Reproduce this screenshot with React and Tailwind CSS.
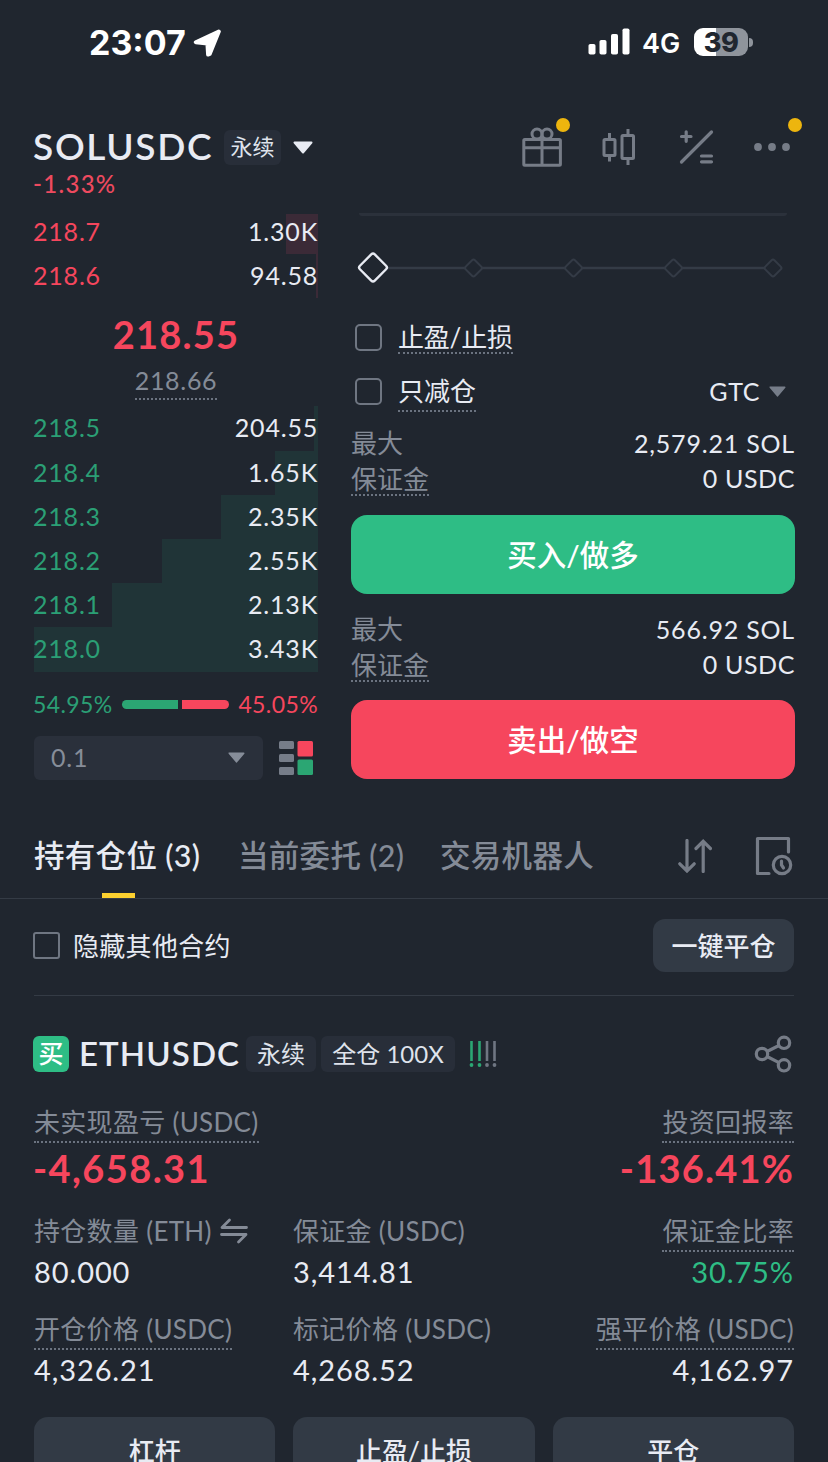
import React from 'react';

const asks = [
  { price: '218.7', size: '1.30K', depth: 32, depthTop: true },
  { price: '218.6', size: '94.58', depth: 2 },
];

const bids = [
  { price: '218.5', size: '204.55', depth: 4 },
  { price: '218.4', size: '1.65K', depth: 43 },
  { price: '218.3', size: '2.35K', depth: 97 },
  { price: '218.2', size: '2.55K', depth: 156 },
  { price: '218.1', size: '2.13K', depth: 206 },
  { price: '218.0', size: '3.43K', depth: 284 },
];

const Dotted = ({ children, className = '' }) => (
  <span className={`flex items-center border-y-2 border-dotted border-t-transparent border-b-[#6b7380] ${className}`}>
    {children}
  </span>
);

const Checkbox = ({ className = 'rounded-[5px]' }) => (
  <span className={`w-[27px] h-[27px] shrink-0 border-2 border-[#6f7682] ${className}`} />
);

const Caret = ({ className }) => (
  <svg viewBox="0 0 20 13" className={className} fill="currentColor" stroke="currentColor" strokeWidth="2" strokeLinejoin="round">
    <path d="M1.5 1.5h17L10 11.5z" />
  </svg>
);

function StatusBar() {
  return (
    <div className="h-[84px] shrink-0 flex items-center justify-between pl-[89px] pr-[77px] text-white font-['Inter']">
      <div className="flex items-center pt-[1px]">
        <span className="text-[34px] leading-none font-bold w-[104px] pt-[1px]">23:07</span>
        <svg viewBox="0 0 28 28" className="w-7 h-7" fill="#fff" stroke="#fff" strokeWidth="4" strokeLinejoin="round">
          <path d="M25.8 2.6L2.8 13.2l11.6 1.2.7 11.2 1.6-.6z" />
        </svg>
      </div>
      <div className="flex items-center">
        <svg viewBox="0 0 42 28" className="w-[42px] h-7 mr-3 -ml-px" fill="#fff">
          <rect x="0.5" y="16" width="7" height="10.5" rx="1.8" />
          <rect x="11.5" y="12" width="7" height="14.5" rx="1.8" />
          <rect x="23" y="6" width="7" height="20.5" rx="1.8" />
          <rect x="34.5" y="0.5" width="7" height="26" rx="1.8" />
        </svg>
        <span className="text-[27px] leading-none font-semibold w-[52px] pt-[2px]">4G</span>
        <div className="relative w-[54px] h-[28px] rounded-[9px] bg-linear-to-r from-white from-40% to-[#8f949c] to-40% flex items-center justify-center text-[27px] leading-none font-extrabold text-[#20262f] tracking-[-0.5px]">
          39
        </div>
        <span className="w-1 h-[9px] ml-[1px] -mr-[2px] rounded-r-full bg-[#8f949c]" />
      </div>
    </div>
  );
}

function Header() {
  return (
    <div className="relative h-[130px] shrink-0 px-[34px]">
      <div className="h-[126px] flex items-center justify-between">
        <div className="flex items-center">
          <span className="w-[190px] pb-[3px] -ml-px mr-px text-[37px] leading-none font-semibold tracking-[1.7px] text-[#e8ebf3]">SOLUSDC</span>
          <span className="w-[57px] h-[35px] rounded-md bg-[#282e39] flex items-center justify-center text-[22px] leading-none text-[#dfe3ec]">永续</span>
          <Caret className="w-5 h-[13px] ml-3 text-[#e8ebf3]" />
        </div>
        <div className="flex items-center -translate-x-px text-[#767c87]">
          <svg viewBox="0 0 40 40" className="w-10 h-10 mr-[39px]" fill="none" stroke="currentColor" strokeWidth="3">
            <rect x="1.8" y="12.5" width="36.6" height="25.8" rx="1" />
            <path d="M1.8 20.8h36.6M20 12v26" />
            <circle cx="15" cy="7" r="5" />
            <circle cx="25" cy="7" r="5" />
          </svg>
          <svg viewBox="0 0 36 38" className="w-9 h-[38px] mr-[41px]" fill="none" stroke="currentColor" strokeWidth="3">
            <rect x="3" y="11.5" width="11" height="16" rx="1" />
            <path d="M8.5 5v6M8.5 28v5.5M27 1v6M27 31v6" />
            <rect x="21" y="7.5" width="11.5" height="23" rx="1" />
          </svg>
          <svg viewBox="0 0 36 36" className="w-9 h-9 mr-[40px]" fill="none" stroke="currentColor" strokeWidth="3.2" strokeLinecap="round">
            <path d="M3.500 33L33.500 3M3.500 7.500h9.500M8.200 2.800v9.500M23.500 27h10M23.500 32.800h10" />
          </svg>
          <svg viewBox="0 0 36 8" className="w-9 h-2 mr-[3px]" fill="currentColor">
            <circle cx="4" cy="4" r="3.9" />
            <circle cx="18" cy="4" r="3.9" />
            <circle cx="32" cy="4" r="3.9" />
          </svg>
        </div>
      </div>
      <span className="absolute left-[33px] top-[88px] text-[24px] leading-6 font-medium tracking-[1.3px] text-[#ee4a5f]">-1.33%</span>
      <span className="absolute left-[556px] top-[34px] w-[14px] h-[14px] rounded-full bg-[#edb50e]" />
      <span className="absolute left-[788px] top-[34px] w-[14px] h-[14px] rounded-full bg-[#edb50e]" />
    </div>
  );
}

function BookRow({ row, side }) {
  return (
    <div className="relative h-[44.2px] flex items-center justify-between text-[25px] leading-none tracking-[0.8px]">
      <span
        className={`absolute right-0 bottom-0 ${side === 'ask' ? 'bg-[#3b2a37]' : 'bg-[#203437]'} ${row.depthTop ? 'top-1' : 'top-0'}`}
        style={{ width: row.depth }}
      />
      <span className={`relative -ml-px pb-[1px] ${side === 'ask' ? 'text-[#f6465d]' : 'text-[#2b9f75]'}`}>{row.price}</span>
      <span className="relative pb-[1px] text-[#e8ebf3]">{row.size}</span>
    </div>
  );
}

function OrderBook() {
  return (
    <div className="w-[284px] shrink-0 -mt-1">
      {asks.map(row => <BookRow key={row.price} row={row} side="ask" />)}
      <div className="h-[72px] flex items-center justify-center text-[38px] leading-none font-bold tracking-[1.2px] text-[#f6465d]">218.55</div>
      <div className="h-[37px] -mt-[8px] flex items-center justify-center">
        <Dotted className="h-[38px] text-[25px] leading-none tracking-[0.7px] text-[#848b97]">218.66</Dotted>
      </div>
      <div className="h-[7px]" />
      {bids.map(row => <BookRow key={row.price} row={row} side="bid" />)}
      <div className="h-[64px] pt-[1px] flex items-center justify-between text-[23px] leading-none tracking-[0.4px]">
        <span className="-ml-px text-[#2b9f75]">54.95%</span>
        <div className="flex gap-1 -ml-px">
          <span className="w-[56px] h-[9px] rounded-l-full bg-[#2ba673]" />
          <span className="w-[47px] h-[9px] rounded-r-full bg-[#f6465d]" />
        </div>
        <span className="text-[#f6465d]">45.05%</span>
      </div>
      <div className="h-11 flex items-center justify-between">
        <div className="w-[229px] h-11 rounded-md bg-[#2a303b] flex items-center justify-between pl-[17px] pr-[18px] text-[#868d99]">
          <span className="text-[25px] leading-none tracking-[0.8px]">0.1</span>
          <Caret className="w-[17px] h-[11px]" />
        </div>
        <svg viewBox="0 0 34 34" className="w-[34px] h-[34px] mr-[5px]">
          <g fill="#767d89">
            <rect x="0" y="0" width="15" height="8" rx="1.5" />
            <rect x="0" y="13" width="15" height="8" rx="1.5" />
            <rect x="0" y="26" width="15" height="8" rx="1.5" />
          </g>
          <rect x="18.5" y="0" width="15.5" height="15.5" rx="1.5" fill="#f6465d" />
          <rect x="18.5" y="18.5" width="15.5" height="15.5" rx="1.5" fill="#2ba673" />
        </svg>
      </div>
    </div>
  );
}

function MaxInfo({ max }) {
  return (
    <div className="text-[25px] leading-none tracking-[0.6px] text-[#e8ebf3]">
      <div className="h-9 flex items-center justify-between">
        <span className="text-[26px] tracking-normal text-[#848b97]">最大</span>
        <span className="tracking-[0.8px]">{max}</span>
      </div>
      <div className="h-[35px] flex items-center justify-between">
        <Dotted className="h-[34px] text-[26px] tracking-normal text-[#848b97]">保证金</Dotted>
        <span>0 USDC</span>
      </div>
    </div>
  );
}

function OrderForm() {
  return (
    <div className="w-[444px] -mr-px text-[#e8ebf3]">
      <div className="h-[3px] -mt-[1px] mx-2 rounded-b-full bg-[#2b313b]" />
      <svg viewBox="0 0 444 104" className="w-[444px] h-[104px] -mb-1" fill="#20262f">
        <path d="M22 52h393" stroke="#343b46" strokeWidth="2.4" />
        <g stroke="#343b46" strokeWidth="2">
          <rect x="116" y="45.500" width="13" height="13" rx="2" transform="rotate(45 122.500 52)" />
          <rect x="216" y="45.500" width="13" height="13" rx="2" transform="rotate(45 222.500 52)" />
          <rect x="316" y="45.500" width="13" height="13" rx="2" transform="rotate(45 322.500 52)" />
          <rect x="415.500" y="45.500" width="13" height="13" rx="2" transform="rotate(45 422 52)" />
        </g>
        <rect x="11.5" y="41" width="21" height="21" rx="2.5" transform="rotate(45 22 51.5)" stroke="#e8ebf3" strokeWidth="2.4" />
      </svg>
      <div className="h-[42px] pl-1 flex items-center">
        <Checkbox />
        <Dotted className="ml-4 h-[34px] text-[26px] leading-none tracking-[-0.2px]">止盈/止损</Dotted>
      </div>
      <div className="h-[66px] pl-1 flex items-center">
        <Checkbox />
        <Dotted className="ml-4 h-[42px] text-[26px] leading-none">只减仓</Dotted>
        <span className="ml-auto text-[25px] leading-none tracking-[0.6px]">GTC</span>
        <Caret className="w-[17px] h-[11px] ml-[9px] mr-[9px] text-[#767d89]" />
      </div>
      <div className="mt-[1px]"><MaxInfo max="2,579.21 SOL" /></div>
      <div className="mt-[19px] h-[79px] rounded-[16px] bg-[#2ebd85] text-white text-[29.5px] leading-none font-medium flex items-center justify-center">买入/做多</div>
      <div className="mt-[17px]"><MaxInfo max="566.92 SOL" /></div>
      <div className="mt-[18px] h-[79px] rounded-[16px] bg-[#f6465d] text-white text-[29.5px] leading-none font-medium flex items-center justify-center">卖出/做空</div>
    </div>
  );
}

function Tabs() {
  return (
    <div className="mt-[37px] h-[82px] shrink-0 px-[34px] border-b border-[#343b45] flex text-[30.5px] leading-none font-medium tracking-[0.3px] text-[#848b97]">
      <div className="w-[204px] flex flex-col">
        <span className="h-[76px] pt-[1px] flex items-center text-[#e8ebf3]">持有仓位 (3)</span>
        <span className="w-[33px] h-[5px] ml-[68px] bg-[#fcd02f]" />
      </div>
      <span className="w-[202px] h-[76px] pt-[1px] flex items-center">当前委托 (2)</span>
      <span className="h-[76px] pt-[1px] flex items-center">交易机器人</span>
      <div className="h-[76px] pt-[3px] ml-auto flex items-center text-[#767c87]">
        <svg viewBox="0 0 34 34" className="w-[34px] h-[34px] mr-[43px]" fill="none" stroke="currentColor" strokeWidth="3.2" strokeLinecap="round">
          <path d="M9 1.500v30M1.800 24.800L9 32l7.200-7.200M25.200 32.500V2.500M18 9.500L25.200 2.300l7.200 7.200" />
        </svg>
        <svg viewBox="0 0 38 40" className="w-[38px] h-10 mr-[1px]" fill="none" stroke="currentColor" strokeWidth="3.2" strokeLinecap="round">
          <path d="M14 37.500H2.500V2.500h31v13.500" strokeLinejoin="round" />
          <circle cx="27" cy="29" r="8.700" />
          <path d="M26.500 25v4l2 3" />
        </svg>
      </div>
    </div>
  );
}

const Tag = ({ children, className }) => (
  <span className={`h-9 rounded-md bg-[#282e39] flex items-center justify-center text-[24px] leading-none text-[#dfe3ec] ${className}`}>{children}</span>
);

const Field = ({ label, value, dotted, right, tone = 'text-[#e8ebf3]' }) => (
  <div className={`flex flex-col whitespace-nowrap ${right ? 'items-end' : 'items-start'}`}>
    {dotted
      ? <Dotted className="h-[42px] text-[26px] leading-none tracking-[0.3px] text-[#848b97]">{label}</Dotted>
      : <span className="h-[42px] flex items-center text-[26px] leading-none tracking-[0.3px] text-[#848b97]">{label}</span>}
    <span className={`h-[42px] pb-[2px] flex items-center text-[29px] leading-none tracking-[0.9px] ${tone}`}>{value}</span>
  </div>
);

function Position() {
  return (
    <div className="px-[34px]">
      <div className="pt-10 flex items-center">
        <span className="w-9 h-9 -ml-px rounded-md bg-[#2ebd85] text-white text-[25px] leading-none font-medium flex items-center justify-center">买</span>
        <span className="ml-[10px] w-[167px] text-[33px] leading-none font-semibold tracking-[1.1px] text-[#e8ebf3]">ETHUSDC</span>
        <Tag className="w-[70px]">永续</Tag>
        <Tag className="w-[134px] ml-[5px]">全仓 100X</Tag>
        <svg viewBox="0 0 28 28" className="w-7 h-7 ml-[14px]" strokeWidth="2.6">
          <path d="M2.500 1v20M10.500 1v20" stroke="#2ba673" />
          <path d="M18 1v20M25.500 1v20" stroke="#6f7682" />
          <g fill="#2ba673">
            <circle cx="2.500" cy="25" r="1.900" />
            <circle cx="10.500" cy="25" r="1.900" />
          </g>
          <g fill="#6f7682">
            <circle cx="18" cy="25" r="1.900" />
            <circle cx="25.500" cy="25" r="1.900" />
          </g>
        </svg>
        <svg viewBox="0 0 38 38" className="w-[38px] h-[38px] -my-px ml-auto mr-[2px]" fill="none" stroke="#767c87" strokeWidth="3.2">
          <circle cx="8" cy="19" r="5.700" />
          <circle cx="30" cy="7.800" r="5.700" />
          <circle cx="30" cy="30.300" r="5.700" />
          <path d="M13 16.500l12-6M13 21.500l12 6.200" />
        </svg>
      </div>
      <div className="mt-[29px] flex justify-between">
        <div>
          <Dotted className="h-[42px] text-[26px] leading-none tracking-[0.3px] text-[#848b97]">未实现盈亏 (USDC)</Dotted>
          <span className="h-[54px] pb-[3px] -ml-px flex items-center text-[38px] leading-none font-bold tracking-[1.4px] text-[#f6465d]">-4,658.31</span>
        </div>
        <div className="flex flex-col items-end">
          <Dotted className="h-[42px] text-[26px] leading-none tracking-[0.3px] text-[#848b97]">投资回报率</Dotted>
          <span className="h-[54px] pb-[3px] flex items-center text-[38px] leading-none font-bold tracking-[1.2px] text-[#f6465d]">-136.41%</span>
        </div>
      </div>
      <div className="mt-[13px] grid grid-cols-[259px_260px_1fr] gap-y-[14px]">
        <Field
          label={
            <span className="flex items-center">
              持仓数量 (ETH)
              <svg viewBox="0 0 28 26" className="w-7 h-[26px] ml-[8px]" fill="none" stroke="currentColor" strokeWidth="2.8" strokeLinecap="round" strokeLinejoin="round">
                <path d="M26.500 9.500H2L9.500 2M1.500 16.500H26L18.500 24" />
              </svg>
            </span>
          }
          value="80.000"
        />
        <Field label="保证金 (USDC)" value="3,414.81" />
        <Field label="保证金比率" value="30.75%" dotted right tone="text-[#2ebd85]" />
        <Field label="开仓价格 (USDC)" value="4,326.21" dotted />
        <Field label="标记价格 (USDC)" value="4,268.52" />
        <Field label="强平价格 (USDC)" value="4,162.97" dotted right />
      </div>
      <div className="mt-[25px] grid grid-cols-3 gap-[18px]">
        {['杠杆', '止盈/止损', '平仓'].map(label => (
          <span key={label} className="h-[69px] rounded-[14px] bg-[#323a45] flex items-center justify-center text-[26px] leading-none font-medium text-[#e8ebf3]">
            {label}
          </span>
        ))}
      </div>
    </div>
  );
}

export default function App() {
  return (
    <div className="w-[828px] h-[1462px] overflow-hidden flex flex-col bg-[#20262f] font-['Lato','Noto_Sans_CJK_SC',sans-serif]">
      <StatusBar />
      <Header />
      <div className="px-[34px] flex justify-between">
        <OrderBook />
        <OrderForm />
      </div>
      <Tabs />
      <div className="mx-[34px] h-[97px] pb-[2px] shrink-0 border-b border-[#343b45] flex items-center text-[#e8ebf3]">
        <span className="-ml-px flex"><Checkbox className="rounded-[3px]" /></span>
        <span className="ml-[13px] text-[26px] leading-none tracking-[0.3px]">隐藏其他合约</span>
        <span className="ml-auto w-[141px] h-[53px] rounded-[12px] bg-[#323a45] flex items-center justify-center text-[26px] leading-none font-medium">一键平仓</span>
      </div>
      <Position />
    </div>
  );
}
